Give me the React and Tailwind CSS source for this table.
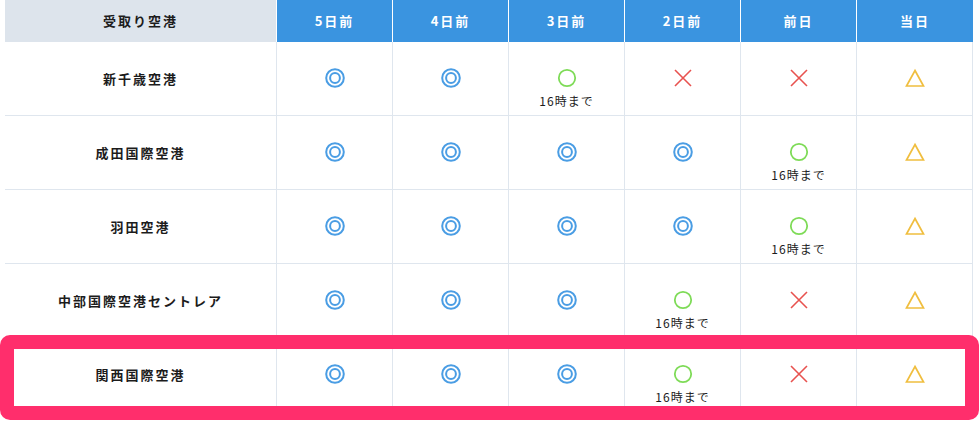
import React from "react";

const font = { fontFamily: '"Noto Sans CJK JP", "Noto Sans", sans-serif' };

function DoubleCircle() {
  return (
    <svg width="20" height="20" viewBox="0 0 20 20">
      <circle cx="10" cy="10" r="8.8" fill="none" stroke="#4a9de4" strokeWidth="2" />
      <circle cx="10" cy="10" r="4.9" fill="none" stroke="#4a9de4" strokeWidth="2" />
    </svg>
  );
}
function Circle() {
  return (
    <svg width="20" height="20" viewBox="0 0 20 20">
      <circle cx="10" cy="10" r="8.2" fill="none" stroke="#7edb57" strokeWidth="1.8" />
    </svg>
  );
}
function Cross() {
  return (
    <svg width="20" height="20" viewBox="0 0 20 20">
      <path d="M2 2 L18 18 M18 2 L2 18" stroke="#e8524f" strokeWidth="1.6" fill="none" />
    </svg>
  );
}
function Triangle() {
  return (
    <svg width="20" height="20" viewBox="0 0 20 20">
      <path d="M10 2.5 L18.5 18 L1.5 18 Z" stroke="#f0be3f" strokeWidth="1.7" fill="none" strokeLinejoin="miter" />
    </svg>
  );
}

const icons = { d: DoubleCircle, o: Circle, x: Cross, t: Triangle };

const headers = ["5日前", "4日前", "3日前", "2日前", "前日", "当日"];

const rows = [
  { name: "新千歳空港", cells: ["d", "d", "o16", "x", "x", "t"] },
  { name: "成田国際空港", cells: ["d", "d", "d", "d", "o16", "t"] },
  { name: "羽田空港", cells: ["d", "d", "d", "d", "o16", "t"] },
  { name: "中部国際空港セントレア", cells: ["d", "d", "d", "o16", "x", "t"] },
  { name: "関西国際空港", cells: ["d", "d", "d", "o16", "x", "t"] },
];

const gridCols = "grid grid-cols-[271px_116px_116px_116px_116px_116px_117px]";

export default function App() {
  return (
    <div className="relative w-[980px] h-[421px] bg-white overflow-hidden" style={font}>
      <div className="ml-[5px] w-[968px]">
        <div className={gridCols + " h-[42px]"}>
          <div className="bg-[#dde4ec] flex items-center justify-center text-[13px] font-bold tracking-[2px] text-[#1c1c1c]">
            受取り空港
          </div>
          {headers.map((h, i) => (
            <div
              key={h}
              className="bg-[#3a94e0] border-l border-white flex items-center justify-center text-[13px] font-bold tracking-[2px] text-white"
            >
              {h}
            </div>
          ))}
        </div>
        {rows.map((r) => (
          <div key={r.name} className={gridCols + " border-b border-[#dfe6ee]"}>
            <div className="h-[73px] flex items-center justify-center text-[13px] font-bold tracking-[2px] text-[#1c1c1c]">
              {r.name}
            </div>
            {r.cells.map((c, i) => {
              const Icon = icons[c[0]];
              const last = i === r.cells.length - 1;
              return (
                <div
                  key={i}
                  className={
                    "h-[73px] flex flex-col items-center pt-[26px] border-l border-[#dfe6ee]" +
                    (last ? " border-r" : "")
                  }
                >
                  <div className="h-[20px] flex items-center justify-center">
                    <Icon />
                  </div>
                  {c.length > 1 && (
                    <div className="mt-[6px] text-[12px] leading-[14px] tracking-[1px] text-[#1c1c1c]">
                      16時まで
                    </div>
                  )}
                </div>
              );
            })}
          </div>
        ))}
      </div>
      <div className="absolute left-0 top-[335px] w-[979px] h-[85px] border-[14px] border-[#ff2e6c] rounded-[10px]" />
    </div>
  );
}
